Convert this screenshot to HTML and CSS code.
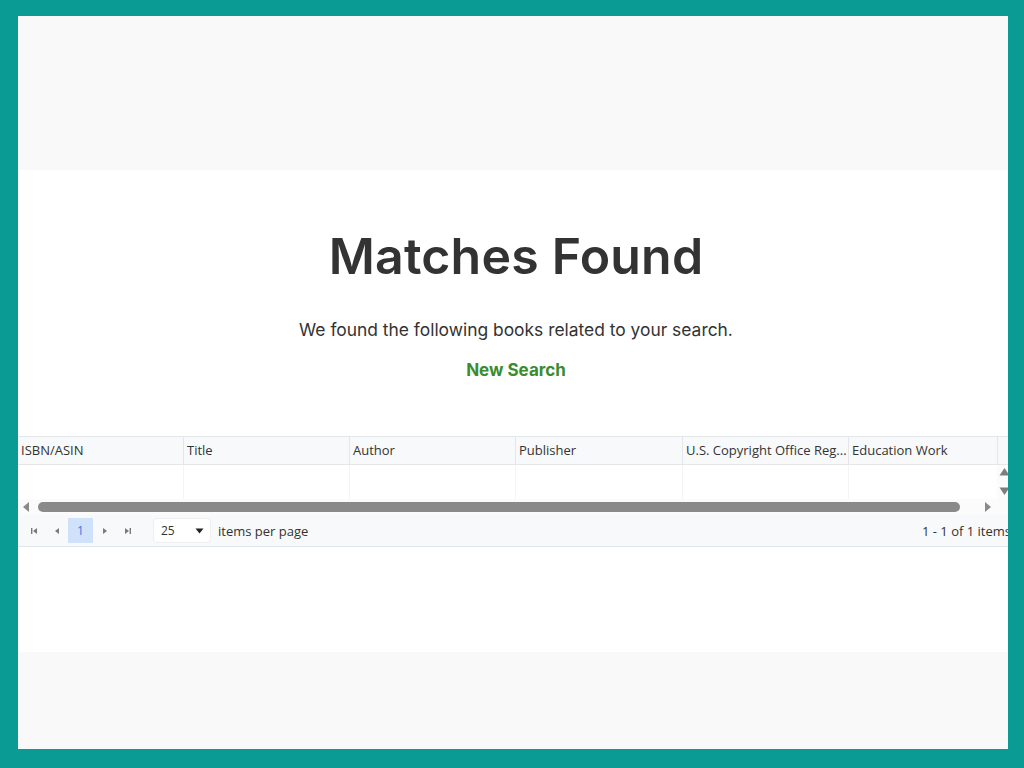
FILE: index.html
```html
<!DOCTYPE html>
<html lang="en">
<head>
<meta charset="utf-8">
<title>Matches Found</title>
<link rel="stylesheet" href="styles.css">
</head>
<body>
<div class="frame">
  <div class="page">
    <div class="band-top"></div>
    <main class="main">
      <h1 class="title">Matches Found</h1>
      <p class="lead">We found the following books related to your search.</p>
      <a class="new-search" href="#">New Search</a>
      <div class="grid">
        <div class="grid-head">
          <div class="cols">
            <div class="th">ISBN/ASIN</div>
            <div class="th">Title</div>
            <div class="th">Author</div>
            <div class="th wide">Publisher</div>
            <div class="th">U.S. Copyright Office Reg...</div>
            <div class="th">Education Work</div>
            <div class="th"></div>
          </div>
          <div class="head-gutter"></div>
        </div>
        <div class="grid-body">
          <div class="cols">
            <div class="td"></div>
            <div class="td"></div>
            <div class="td"></div>
            <div class="td wide"></div>
            <div class="td"></div>
            <div class="td"></div>
            <div class="td"></div>
          </div>
          <div class="vscroll">
            <svg class="varrow" width="11" height="9" viewBox="0 0 11 9"><path d="M0.5 8.5 L5.5 1 L10.5 8.5 Z" fill="#7d7d7d"/></svg>
            <svg class="varrow" width="11" height="9" viewBox="0 0 11 9"><path d="M0.5 0.5 L5.5 8 L10.5 0.5 Z" fill="#7d7d7d"/></svg>
          </div>
        </div>
        <div class="hscroll">
          <svg class="arrow" width="8" height="10" viewBox="0 0 8 10"><path d="M7 0 L1 5 L7 10 Z" fill="#8a8a8a"/></svg>
          <div class="thumb"></div>
          <svg class="arrow" width="8" height="10" viewBox="0 0 8 10"><path d="M1 0 L7 5 L1 10 Z" fill="#8a8a8a"/></svg>
          <div class="corner"></div>
        </div>
        <div class="pager">
          <div class="pager-nav">
            <span class="pbtn"><svg width="8" height="8" viewBox="0 0 8 8"><path d="M1 1 H2.4 V7 H1 Z M7 1 L3 4 L7 7 Z" fill="#7a7a7a"/></svg></span>
            <span class="pbtn"><svg width="8" height="8" viewBox="0 0 8 8"><path d="M6 1 L2 4 L6 7 Z" fill="#7a7a7a"/></svg></span>
            <span class="pnum">1</span>
            <span class="pbtn"><svg width="8" height="8" viewBox="0 0 8 8"><path d="M2 1 L6 4 L2 7 Z" fill="#7a7a7a"/></svg></span>
            <span class="pbtn"><svg width="8" height="8" viewBox="0 0 8 8"><path d="M1 1 L5 4 L1 7 Z M5.6 1 H7 V7 H5.6 Z" fill="#7a7a7a"/></svg></span>
          </div>
          <div class="pagesize">
            <span>25</span>
            <svg width="9" height="6" viewBox="0 0 9 6"><path d="M0.5 0.5 L8.5 0.5 L4.5 5.5 Z" fill="#222"/></svg>
          </div>
          <span class="per-page">items per page</span>
          <span class="pager-info">1 - 1 of 1 items</span>
        </div>
      </div>
    </main>
    <div class="band-bottom"></div>
  </div>
</div>
</body>
</html>
```

FILE: styles.css
```css
html, body {
  margin: 0;
  padding: 0;
}
body {
  background: #099b94;
  width: 1024px;
  height: 768px;
  padding: 16px 16px 0 18px;
  box-sizing: border-box;
}
.frame {
  width: 990px;
  height: 733px;
  overflow: hidden;
  background: #f9f9f9;
}
.page {
  width: 996px;
  display: flex;
  flex-direction: column;
}
.band-top {
  height: 154px;
  background: #f9f9f9;
}
.band-bottom {
  height: 97px;
  background: #f9f9f9;
}
.main {
  height: 482px;
  background: #ffffff;
  display: flex;
  flex-direction: column;
  align-items: center;
}
.title {
  margin: 58px 0 0;
  font-family: "Inter", "Open Sans", sans-serif;
  font-weight: 600;
  font-size: 50px;
  line-height: 56px;
  color: #333333;
  letter-spacing: 0.2px;
}
.lead {
  margin: 34px 0 0;
  font-family: "Inter", "Open Sans", sans-serif;
  font-size: 17.4px;
  line-height: 24px;
  color: #333333;
}
.new-search {
  margin-top: 16px;
  font-family: "Inter", "Open Sans", sans-serif;
  font-weight: 700;
  font-size: 17px;
  line-height: 24px;
  color: #3b8c2e;
  text-decoration: none;
}
.grid {
  margin-top: 54px;
  width: 996px;
  font-family: "Open Sans", "Noto Sans", sans-serif;
  font-size: 13px;
  color: #333333;
}
.grid-head {
  display: flex;
  background: #f8f9fa;
  border-top: 1px solid #e4e7ea;
  border-bottom: 1px solid #e4e7ea;
  height: 27px;
}
.cols {
  width: 979px;
  display: flex;
  overflow: hidden;
  flex: none;
}
.th {
  flex: none;
  width: 166px;
  box-sizing: border-box;
  padding: 0 3px;
  border-right: 1px solid #e4e7ea;
  line-height: 27px;
  white-space: nowrap;
  overflow: hidden;
}
.th.wide,
.td.wide {
  width: 167px;
}
.head-gutter {
  flex: 1;
  border-left: 1px solid #e4e7ea;
}
.grid-body {
  display: flex;
  height: 34px;
  background: #ffffff;
}
.td {
  flex: none;
  width: 166px;
  box-sizing: border-box;
  border-right: 1px solid #f3f4f5;
}
.vscroll {
  flex: 1;
  display: flex;
  flex-direction: column;
  align-items: center;
  justify-content: space-between;
  padding: 2px 3px 3px 0;
  background: #fbfbfb;
}
.varrow {
  flex: none;
}
.hscroll {
  display: flex;
  align-items: center;
  height: 16px;
  background: #fbfbfb;
}
.hscroll .arrow {
  flex: none;
  margin: 0 4px;
}
.hscroll .arrow:first-child {
  margin: 0 8px 0 4px;
}
.thumb {
  width: 922px;
  height: 10px;
  border-radius: 5px;
  background: #8a8a8a;
}
.hscroll .arrow:nth-of-type(2) {
  margin-left: 24px;
}
.corner {
  flex: 1;
}
.pager {
  display: flex;
  align-items: center;
  height: 31px;
  background: #f8f9fa;
  border-bottom: 1px solid #e4e7ea;
  font-size: 13px;
}
.pager-nav {
  display: flex;
  align-items: center;
  margin-left: 4px;
}
.pbtn {
  width: 23px;
  height: 25px;
  display: flex;
  align-items: center;
  justify-content: center;
}
.pnum {
  width: 25px;
  height: 25px;
  display: flex;
  align-items: center;
  justify-content: center;
  background: #d0e1fa;
  color: #3b78e7;
  font-size: 12px;
}
.pagesize {
  margin-left: 14px;
  width: 58px;
  height: 25px;
  box-sizing: border-box;
  display: flex;
  align-items: center;
  justify-content: space-between;
  padding: 0 6px 0 7px;
  background: #ffffff;
  border: 1px solid #eceef0;
  border-radius: 4px;
  font-size: 12px;
  color: #333333;
}
.per-page {
  margin-left: 7px;
}
.pager-info {
  margin-left: auto;
  margin-right: 3px;
}
```
